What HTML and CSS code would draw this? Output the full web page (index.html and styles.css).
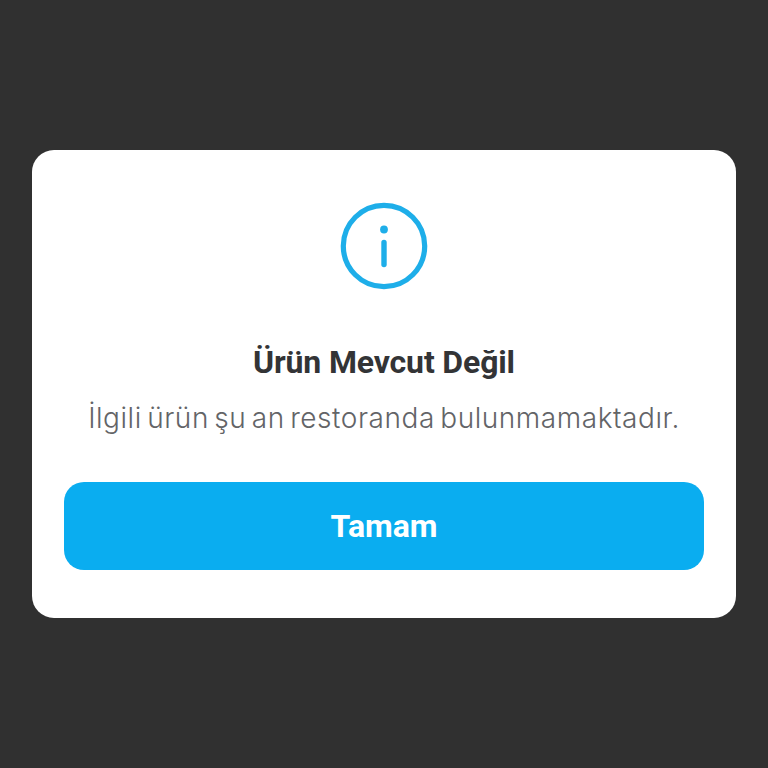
FILE: index.html
```html
<!DOCTYPE html>
<html lang="tr">
<head>
<meta charset="utf-8">
<title>Ürün Mevcut Değil</title>
<link rel="stylesheet" href="styles.css">
</head>
<body>
<main class="dialog">
  <svg class="icon" viewBox="0 0 88 88" width="88" height="88" aria-hidden="true">
    <circle cx="44" cy="44" r="40.7" fill="none" stroke="#1eaee9" stroke-width="5.2"/>
    <circle cx="44" cy="27.5" r="3.9" fill="#1eaee9"/>
    <line x1="44" y1="40.5" x2="44" y2="62.5" stroke="#1eaee9" stroke-width="5.4" stroke-linecap="round"/>
  </svg>
  <h1 class="title">Ürün Mevcut Değil</h1>
  <p class="message">İlgili ürün şu an restoranda bulunmamaktadır.</p>
  <button class="action" type="button">Tamam</button>
</main>
</body>
</html>
```
FILE: styles.css
```css
html, body {
  margin: 0;
  height: 100%;
}
body {
  background: #303030;
  display: flex;
  align-items: center;
  justify-content: center;
}
.dialog {
  box-sizing: border-box;
  width: 704px;
  height: 468px;
  padding: 52px 32px 48px;
  background: #fff;
  border-radius: 22px;
  display: flex;
  flex-direction: column;
  align-items: center;
}
.icon {
  display: block;
  flex: none;
}
.title {
  margin: 52px 0 0;
  font: 700 32px/40px Roboto, sans-serif;
  letter-spacing: -0.15px;
  color: #333436;
}
.message {
  margin: 16px 0 0;
  font: 300 28px/40px Inter, sans-serif;
  letter-spacing: 0.55px;
  word-spacing: -3px;
  color: #636467;
  white-space: nowrap;
}
.action {
  margin-top: 44px;
  width: 640px;
  height: 88px;
  flex: none;
  border: 0;
  border-radius: 20px;
  background: #0aadf0;
  color: #fff;
  font: 700 32px/40px Roboto, sans-serif;
}
```
